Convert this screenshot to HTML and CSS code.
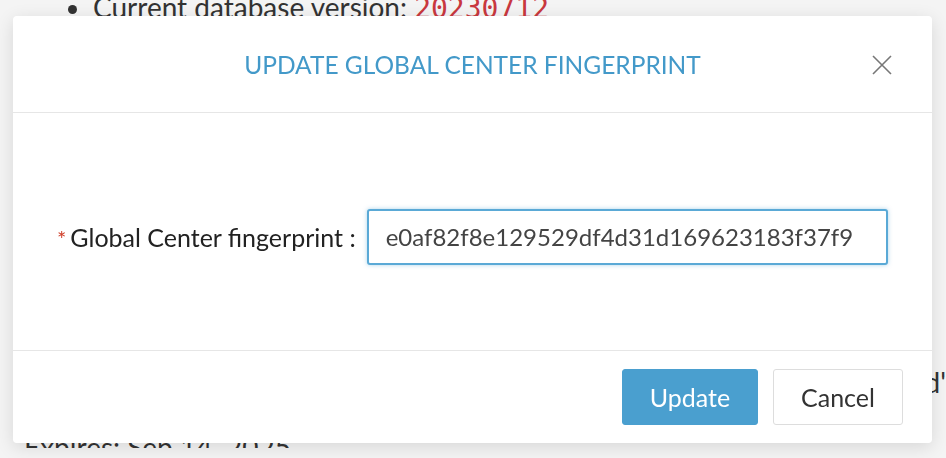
FILE: index.html
```html
<!DOCTYPE html>
<html lang="en">
<head>
  <meta charset="UTF-8">
  <meta name="viewport" content="width=device-width, initial-scale=1.0">
  <title>Update Global Center Fingerprint</title>
  <link rel="stylesheet" href="styles.css">
</head>
<body>
  <div class="page">
    <ul class="info-list">
      <li>Current database version: <code class="version">20230712</code></li>
    </ul>
    <p class="hidden-line">Global Center fingerprint has been configured'</p>
    <p class="expires">Expires: Sep 14, 2025</p>
  </div>

  <!-- Modal -->
  <div class="modal">
    <div class="modal-header">
      <h2>Update Global Center Fingerprint</h2>
      <button class="close" aria-label="Close">
        <svg width="20" height="20" viewBox="0 0 20 20">
          <path d="M1 1 L19 19 M19 1 L1 19" stroke="#777" stroke-width="1.6" fill="none"/>
        </svg>
      </button>
    </div>
    <div class="modal-body">
      <label class="field-label" for="fingerprint"><span class="req">*</span>Global Center fingerprint :</label>
      <input type="text" id="fingerprint" class="field-input" value="e0af82f8e129529df4d31d169623183f37f9">
    </div>
    <div class="modal-footer">
      <button class="btn btn-primary">Update</button>
      <button class="btn btn-default">Cancel</button>
    </div>
  </div>
</body>
</html>
```

FILE: styles.css
```css
body {
  font-family: Lato, "Open Sans", sans-serif;
  margin: 0;
  padding: 0;
  background-color: #f4f4f4;
  color: #333;
  overflow: hidden;
}

.page {
  height: 458px;
}

.info-list {
  margin: -10px 0 0 0;
  padding-left: 93px;
  font-size: 28px;
  color: #333;
}

.version {
  font-family: "DejaVu Sans Mono", monospace;
  color: #c9383f;
  font-size: 28px;
}

.hidden-line {
  margin: 340px 0 0 0;
  font-size: 28px;
  text-align: right;
  white-space: nowrap;
}

.expires {
  margin: 31px 0 0 24px;
  font-size: 28px;
}

.modal {
  position: fixed;
  top: 16px;
  left: 13px;
  width: 919px;
  height: 427px;
  background-color: #fff;
  border-radius: 4px;
  box-shadow: 0 4px 18px rgba(0, 0, 0, 0.12);
  display: flex;
  flex-direction: column;
}

.modal-header {
  height: 96px;
  border-bottom: 1px solid #e6e6e6;
  display: flex;
  align-items: center;
  justify-content: center;
  position: relative;
}

.modal-header h2 {
  margin: 0;
  font-size: 24.5px;
  font-weight: 400;
  text-transform: uppercase;
  color: #4399c9;
}

.close {
  position: absolute;
  right: 40px;
  top: 39px;
  background: none;
  border: 0;
  padding: 0;
  width: 20px;
  height: 20px;
  cursor: pointer;
}

.modal-body {
  height: 238px;
  box-sizing: border-box;
  padding: 10px 0 0 44px;
  border-bottom: 1px solid #e6e6e6;
  display: flex;
  align-items: center;
}

.field-label {
  font-size: 25px;
  color: #222;
  margin-right: 11px;
}

.req {
  color: #d0412c;
  font-size: 22px;
  margin-right: 4px;
}

.field-input {
  width: 483px;
  height: 52px;
  box-sizing: content-box;
  padding: 0 17px;
  border: 2px solid #5aa9d6;
  border-radius: 3px;
  box-shadow: 0 0 4px rgba(90, 169, 214, 0.5);
  font-family: Lato, sans-serif;
  font-size: 24px;
  color: #444;
  outline: none;
}

.modal-footer {
  flex: 1;
  display: flex;
  justify-content: flex-end;
  align-items: center;
  gap: 15px;
  padding-right: 29px;
}

.btn {
  height: 56px;
  border-radius: 3px;
  font-family: Lato, sans-serif;
  font-size: 25px;
  cursor: pointer;
}

.btn-primary {
  width: 136px;
  background-color: #4a9fcf;
  border: 1px solid #4a9fcf;
  color: #fff;
}

.btn-default {
  width: 130px;
  background-color: #fff;
  border: 1px solid #ddd;
  color: #333;
}
```
